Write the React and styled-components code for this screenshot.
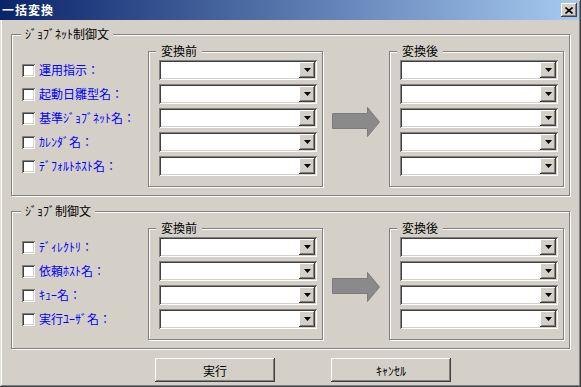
import React from 'react'
import styled, { createGlobalStyle } from 'styled-components'

const GlobalStyle = createGlobalStyle`
  html, body {
    margin: 0;
    padding: 0;
    background: #d4d0c8;
  }
  body {
    font-family: "Noto Sans CJK JP", "DejaVu Sans", sans-serif;
    font-size: 12px;
  }
`

const raised = `
  box-shadow: inset -1px -1px #404040, inset 1px 1px #fff,
    inset -2px -2px #808080, inset 2px 2px #d4d0c8;
`

const sunken = `
  box-shadow: inset 1px 1px #808080, inset -1px -1px #fff,
    inset 2px 2px #404040, inset -2px -2px #d4d0c8;
`

const jobnetRows = ['運用指示：', '起動日雛型名：', '基準ｼﾞｮﾌﾞﾈｯﾄ名：', 'ｶﾚﾝﾀﾞ名：', 'ﾃﾞﾌｫﾙﾄﾎｽﾄ名：']
const jobRows = ['ﾃﾞｨﾚｸﾄﾘ：', '依頼ﾎｽﾄ名：', 'ｷｭｰ名：', '実行ﾕｰｻﾞ名：']

const CloseIcon = () => (
  <svg width='8' height='7' viewBox='0 0 8 7'>
    <path d='M0.5 0.5 L7.5 6.5 M7.5 0.5 L0.5 6.5' stroke='#000' strokeWidth='1.6' fill='none' />
  </svg>
)

const DownIcon = () => (
  <svg width='7' height='4' viewBox='0 0 7 4'>
    <polygon points='0,0 7,0 3.5,4' fill='#000' />
  </svg>
)

const ArrowIcon = () => (
  <svg width='48' height='30' viewBox='0 0 48 30'>
    <polygon points='0.5,6.5 35.5,6.5 35.5,0.5 47.5,15 35.5,29.5 35.5,21.5 0.5,21.5' fill='#8a8a8a' stroke='#7c7c7c' />
  </svg>
)

const Combo = () => (
  <ComboBox>
    <DropButton>
      <DownIcon />
    </DropButton>
  </ComboBox>
)

const Section = ({ title, rows }) => (
  <Group>
    <GroupLegend>{title}</GroupLegend>
    <GroupRow>
      <LabelColumn>
        {rows.map((label) => (
          <CheckRow key={label}>
            <CheckBox />
            <span>{label}</span>
          </CheckRow>
        ))}
      </LabelColumn>
      <Panel>
        <PanelLegend>変換前</PanelLegend>
        <ComboList>
          {rows.map((label) => <Combo key={label} />)}
        </ComboList>
      </Panel>
      <ArrowColumn>
        <ArrowIcon />
      </ArrowColumn>
      <Panel>
        <PanelLegend>変換後</PanelLegend>
        <ComboList>
          {rows.map((label) => <Combo key={label} />)}
        </ComboList>
      </Panel>
    </GroupRow>
  </Group>
)

const App = () => {
  return (
    <>
      <GlobalStyle />
      <Window>
        <TitleBar>
          <Title>一括変換</Title>
          <CloseButton>
            <CloseIcon />
          </CloseButton>
        </TitleBar>
        <Body>
          <Section title='ｼﾞｮﾌﾞﾈｯﾄ制御文' rows={jobnetRows} />
          <Section title='ｼﾞｮﾌﾞ制御文' rows={jobRows} />
          <ButtonRow>
            <PushButton>実行</PushButton>
            <PushButton>ｷｬﾝｾﾙ</PushButton>
          </ButtonRow>
        </Body>
      </Window>
    </>
  )
}

const Window = styled.div`
  width: 581px;
  height: 387px;
  box-sizing: border-box;
  background: #d4d0c8;
  box-shadow: inset -1px -1px #404040, inset 1px 1px #e4e2dc,
    inset -2px -2px #808080, inset 2px 2px #fff;
  display: flex;
  flex-direction: column;
`

const TitleBar = styled.div`
  height: 20px;
  margin-right: 2px;
  padding: 0 2px 0 2px;
  display: flex;
  align-items: center;
  justify-content: space-between;
  background: linear-gradient(to right, #0a246a, #a6caf0);
`

const Title = styled.span`
  color: #fff;
  font-weight: bold;
  font-size: 12px;
  letter-spacing: 1px;
  line-height: 20px;
`

const CloseButton = styled.div`
  width: 16px;
  height: 14px;
  background: #d4d0c8;
  ${raised}
  display: flex;
  align-items: center;
  justify-content: center;
`

const Body = styled.div`
  padding: 7px 0 0 11px;
  display: flex;
  flex-direction: column;
`

const Group = styled.fieldset`
  margin: 0;
  & + & {
    margin-top: 8px;
  }
  padding: 3px 5px 8px 0;
  width: 559px;
  min-width: 0;
  box-sizing: border-box;
  border: 1px solid #808080;
  box-shadow: inset 1px 1px #fff, 1px 1px #fff;
`

const GroupLegend = styled.legend`
  margin-left: 9px;
  padding: 0 4px;
  line-height: 14px;
  font-size: 12px;
  color: #000;
  background: #d4d0c8;
`

const GroupRow = styled.div`
  display: flex;
  align-items: flex-start;
`

const LabelColumn = styled.div`
  width: 136px;
  box-sizing: border-box;
  padding: 16px 0 0 10px;
  display: flex;
  flex-direction: column;
  gap: 4px;
`

const CheckRow = styled.div`
  height: 20px;
  display: flex;
  align-items: center;
  gap: 4px;
  color: #0000ff;
  font-size: 12px;
  line-height: 14px;
  white-space: nowrap;
`

const CheckBox = styled.span`
  width: 13px;
  height: 13px;
  flex: none;
  box-sizing: border-box;
  background: #fff;
  ${sunken}
`

const Panel = styled.fieldset`
  margin: 0;
  padding: 2px 5px 10px 10px;
  width: 175px;
  min-width: 0;
  box-sizing: border-box;
  border: 1px solid #808080;
  box-shadow: inset 1px 1px #fff, 1px 1px #fff;
`

const PanelLegend = styled.legend`
  margin-left: -3px;
  padding: 0 5px;
  line-height: 14px;
  font-size: 12px;
  color: #000;
  background: #d4d0c8;
`

const ComboList = styled.div`
  display: flex;
  flex-direction: column;
  gap: 4px;
`

const ComboBox = styled.div`
  width: 158px;
  height: 20px;
  box-sizing: border-box;
  padding: 2px;
  background: #fff;
  ${sunken}
  display: flex;
  justify-content: flex-end;
`

const DropButton = styled.div`
  width: 16px;
  height: 16px;
  background: #d4d0c8;
  ${raised}
  display: flex;
  align-items: center;
  justify-content: center;
`

const ArrowColumn = styled.div`
  width: 66px;
  align-self: stretch;
  box-sizing: border-box;
  padding-top: 13px;
  display: flex;
  align-items: center;
  justify-content: center;
`

const ButtonRow = styled.div`
  margin-top: 9px;
  padding-left: 144px;
  display: flex;
  gap: 56px;
`

const PushButton = styled.div`
  width: 120px;
  height: 24px;
  box-sizing: border-box;
  background: #d4d0c8;
  ${raised}
  display: flex;
  align-items: center;
  justify-content: center;
  font-size: 12px;
  color: #000;
`

export default App
